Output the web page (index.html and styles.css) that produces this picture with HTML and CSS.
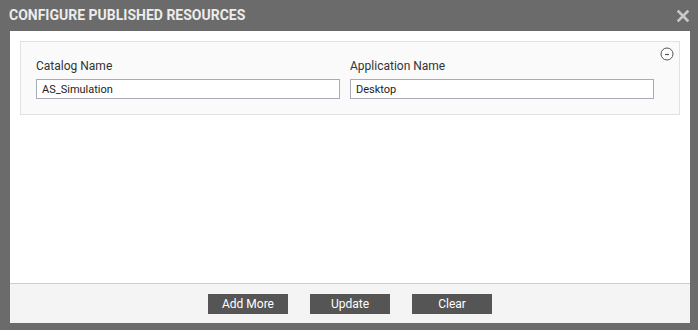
FILE: index.html
```html
<!DOCTYPE html>
<html lang="en">
<head>
    <meta charset="UTF-8">
    <title>Configure Published Resources</title>
    <link rel="stylesheet" href="styles.css">
</head>
<body>
    <div class="dialog">
        <div class="dialog-header">
            <h1 class="dialog-title">CONFIGURE PUBLISHED RESOURCES</h1>
            <button class="close-btn" title="Close">
                <svg width="12" height="12" viewBox="0 0 12 12">
                    <path d="M1.5 1.5 L10.5 10.5 M10.5 1.5 L1.5 10.5" stroke="#c9c9c9" stroke-width="2.6" stroke-linecap="square"/>
                </svg>
            </button>
        </div>

        <div class="dialog-body">
            <div class="resource-row">
                <button class="remove-btn" title="Remove">
                    <svg width="14" height="14" viewBox="0 0 14 14">
                        <circle cx="7" cy="7" r="6" fill="#fff" stroke="#555" stroke-width="1"/>
                        <path d="M5 7.5 H9" stroke="#555" stroke-width="1.2"/>
                    </svg>
                </button>
                <div class="form-group">
                    <label for="catalog">Catalog Name</label>
                    <input type="text" id="catalog" value="AS_Simulation">
                </div>
                <div class="form-group">
                    <label for="application">Application Name</label>
                    <input type="text" id="application" value="Desktop">
                </div>
            </div>
        </div>

        <div class="dialog-footer">
            <button class="btn">Add More</button>
            <button class="btn">Update</button>
            <button class="btn">Clear</button>
        </div>
    </div>
</body>
</html>
```

FILE: styles.css
```css
* {
    margin: 0;
    padding: 0;
    box-sizing: border-box;
    font-family: Roboto, "Liberation Sans", Arial, sans-serif;
}

body {
    background-color: #6b6b6b;
}

.dialog {
    width: 698px;
    height: 330px;
    background-color: #6b6b6b;
}

.dialog-header {
    height: 31px;
    display: flex;
    align-items: center;
    justify-content: space-between;
    padding: 0 9px 0 9px;
}

.dialog-title {
    font-size: 14px;
    font-weight: bold;
    color: #ececec;
    line-height: 16px;
    margin-top: -1px;
}

.close-btn {
    background: none;
    border: none;
    width: 12px;
    height: 12px;
    display: flex;
    cursor: pointer;
}

.dialog-body {
    margin: 0 8px 0 10px;
    height: 252px;
    background-color: #fff;
    padding: 10px;
}

.resource-row {
    position: relative;
    display: grid;
    grid-template-columns: 304px 304px;
    gap: 10px;
    background-color: #fafafa;
    border: 1px solid #e2e2e2;
    padding: 16px 25px 15px 15px;
}

.remove-btn {
    position: absolute;
    top: 5px;
    right: 5px;
    width: 14px;
    height: 14px;
    background: none;
    border: none;
    display: flex;
    cursor: pointer;
}

.form-group label {
    display: block;
    font-size: 12px;
    line-height: 16px;
    color: #333;
    margin-bottom: 5px;
}

.form-group input {
    display: block;
    width: 100%;
    height: 20px;
    border: 1px solid #a9abb8;
    background-color: #fff;
    padding: 0 5px;
    font-size: 11px;
    color: #222;
    outline: none;
}

.dialog-footer {
    margin: 0 8px 0 10px;
    height: 40px;
    border-top: 1px solid #cccccc;
    background-color: #f4f4f4;
    display: flex;
    justify-content: center;
    align-items: center;
    gap: 22px;
}

.btn {
    width: 80px;
    height: 20px;
    border: none;
    background-color: #555;
    color: #fff;
    font-size: 12px;
    cursor: pointer;
}
```
